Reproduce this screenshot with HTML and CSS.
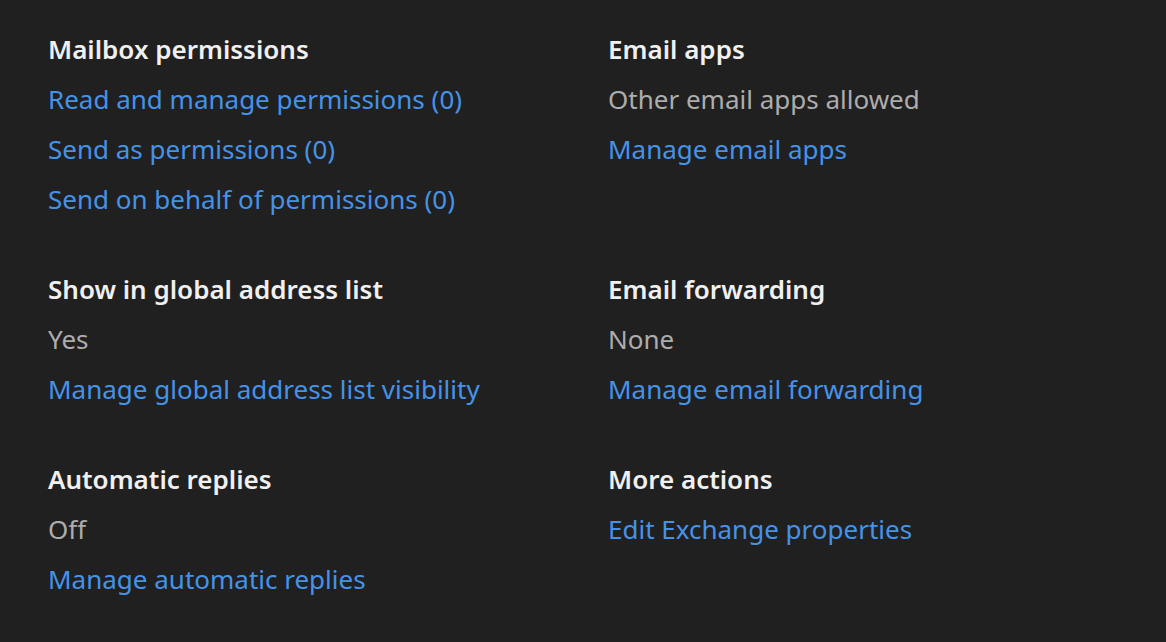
FILE: index.html
```html
<!DOCTYPE html>
<html lang="en">
<head>
<meta charset="utf-8">
<title>Mailbox settings</title>
<link rel="stylesheet" href="styles.css">
</head>
<body>
<main class="settings">
  <section class="group">
    <h2 class="group-title">Mailbox permissions</h2>
    <a class="link" href="#">Read and manage permissions (0)</a>
    <a class="link" href="#">Send as permissions (0)</a>
    <a class="link" href="#">Send on behalf of permissions (0)</a>
  </section>
  <section class="group">
    <h2 class="group-title">Email apps</h2>
    <p class="value">Other email apps allowed</p>
    <a class="link" href="#">Manage email apps</a>
  </section>
  <section class="group">
    <h2 class="group-title">Show in global address list</h2>
    <p class="value">Yes</p>
    <a class="link" href="#">Manage global address list visibility</a>
  </section>
  <section class="group">
    <h2 class="group-title">Email forwarding</h2>
    <p class="value">None</p>
    <a class="link" href="#">Manage email forwarding</a>
  </section>
  <section class="group">
    <h2 class="group-title">Automatic replies</h2>
    <p class="value">Off</p>
    <a class="link" href="#">Manage automatic replies</a>
  </section>
  <section class="group">
    <h2 class="group-title">More actions</h2>
    <a class="link" href="#">Edit Exchange properties</a>
  </section>
</main>
</body>
</html>
```
FILE: styles.css
```css
html, body {
  margin: 0;
  padding: 0;
  background: #202020;
}
body {
  font-family: "Noto Sans", "Open Sans", sans-serif;
  font-size: 26px;
  line-height: 50px;
  color: #adadad;
}
.settings {
  display: grid;
  grid-template-columns: 560px 1fr;
  row-gap: 40px;
  padding: 24px 0 0 48px;
}
.group {
  display: flex;
  flex-direction: column;
  align-items: flex-start;
}
.group-title {
  margin: 0;
  font-size: 26px;
  font-weight: 600;
  color: #f0f0f0;
  line-height: 50px;
}
.value {
  margin: 0;
  color: #adadad;
}
.link {
  color: #4593e8;
  text-decoration: none;
}
```
